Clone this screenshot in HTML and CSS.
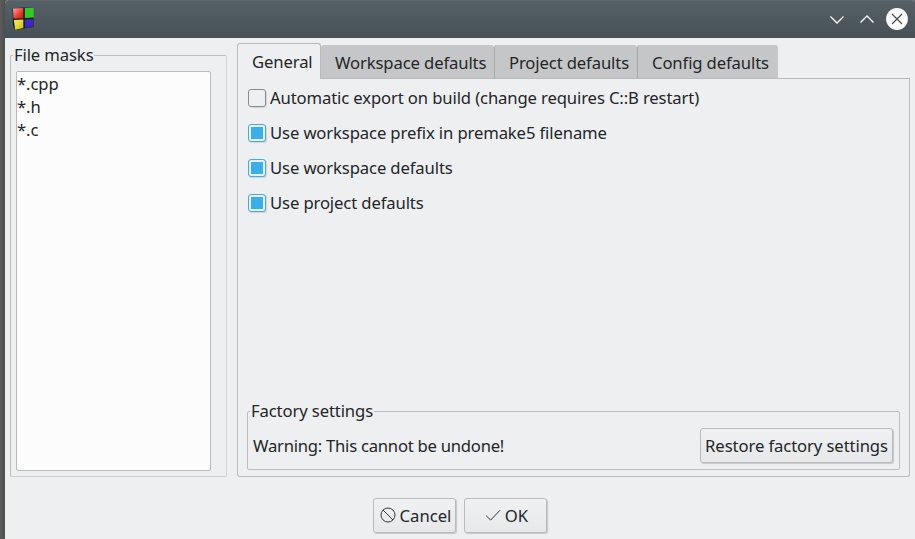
FILE: index.html
```html
<!DOCTYPE html>
<html lang="en">
<head>
<meta charset="utf-8">
<title>Premake settings</title>
<link rel="stylesheet" href="styles.css">
</head>
<body>
<div class="window">
  <header class="titlebar">
    <svg class="logo" width="22" height="24" viewBox="0 0 22 24">
      <defs>
        <linearGradient id="r" x1="0" y1="0" x2="1" y2="1"><stop offset="0" stop-color="#ffa8a0"/><stop offset=".6" stop-color="#ea3c34"/><stop offset="1" stop-color="#c01410"/></linearGradient>
        <linearGradient id="y" x1="0" y1="0" x2="1" y2="1"><stop offset="0" stop-color="#f4f06a"/><stop offset="1" stop-color="#c9c010"/></linearGradient>
      </defs>
      <path d="M0.500 1.500L11 0.500L21.500 1V20L15 21L3 23L1 18Z" fill="#14181a"/>
      <path d="M1 1.500L11.300 1V11.500L1.500 11.500Z" fill="url(#r)"/>
      <path d="M12.800 1L21.800 1V10.500L12.800 11Z" fill="#32c826"/>
      <path d="M1.800 13L11.300 12.500L11.300 21L3.200 22.800Z" fill="url(#y)"/>
      <path d="M12.800 12.500L21.300 12V19.500L12.800 21Z" fill="#3a28c0"/>
    </svg>
    <svg class="controls" width="80" height="24" viewBox="0 0 80 24" fill="none" stroke-width="1.3">
      <path d="M2.500 9.500L9 16L15.500 9.500M32.500 15.500L39 9L45.500 15.500" stroke="#fcfcfc"/>
      <circle cx="69" cy="12" r="10.900" fill="#fcfcfc"/>
      <path d="M64 7L74 17M74 7L64 17" stroke="#475057"/>
    </svg>
  </header>
  <main class="content">
    <section class="group masks">
      <h2 class="legend">File masks</h2>
      <ul class="list"><li>*.cpp</li><li>*.h</li><li>*.c</li></ul>
    </section>
    <section class="notebook">
      <nav class="tabs">
        <div class="tab active">General</div>
        <div class="tab workspace">Workspace defaults</div>
        <div class="tab project">Project defaults</div>
        <div class="tab config">Config defaults</div>
        <div class="tabline"></div>
      </nav>
      <div class="page">
        <div class="checks">
          <div class="check"><span class="box"></span><span class="label">Automatic export on build (change requires C::B restart)</span></div>
          <div class="check"><span class="box on"></span><span class="label">Use workspace prefix in premake5 filename</span></div>
          <div class="check"><span class="box on"></span><span class="label">Use workspace defaults</span></div>
          <div class="check"><span class="box on"></span><span class="label">Use project defaults</span></div>
        </div>
        <section class="group factory">
          <h2 class="legend">Factory settings</h2>
          <div class="row"><span class="warning">Warning: This cannot be undone!</span><div class="button restore">Restore factory settings</div></div>
        </section>
      </div>
    </section>
  </main>
  <footer class="actions">
    <div class="button cancel"><svg width="16" height="16" viewBox="0 0 16 16" fill="none" stroke="#31363b"><circle cx="8" cy="8" r="7"/><path d="M3 3L13 13"/></svg>Cancel</div>
    <div class="button ok"><svg width="16" height="16" viewBox="0 0 16 16" fill="none" stroke="#31363b"><path d="M1.200 8.800L5.700 13L15 3.300"/></svg>OK</div>
  </footer>
</div>
</body>
</html>
```
FILE: styles.css
```css
* { box-sizing: border-box; }
body {
  margin: 0;
  width: 915px;
  height: 539px;
  padding-left: 5px;
  overflow: hidden;
  background: linear-gradient(90deg, #5c5c5c, #4e4e4e 5px);
  font: 16.67px/23px "Noto Sans", sans-serif;
  letter-spacing: -0.125px;
  color: #232627;
  white-space: nowrap;
}
.window { height: 539px; display: flex; flex-direction: column; background: #eeeff1; border-radius: 4px 3px 0 0; }
.titlebar {
  height: 38px;
  flex: none;
  display: flex;
  justify-content: space-between;
  align-items: flex-start;
  padding: 6px 7px 0 7px;
  background: linear-gradient(#566067, #475057);
  border-top: 1px solid #5e676d;
  border-radius: 4px 3px 0 0;
}
.content { display: flex; height: 439px; padding: 5px 5px 0; }
.group { position: relative; border: 1px solid #bcbec0; border-radius: 2px; }
.legend {
  position: absolute;
  top: -13px;
  left: 2px;
  margin: 0;
  padding: 0 1px;
  font: inherit;
  background: #eeeff1;
}
.masks { width: 217px; height: 422px; margin: 12px 10px 0 0; padding: 15px 15px 5px 5px; border-right-color: #d0d2d3; border-bottom-color: #cbcdce; }
.list { height: 400px; margin: 0; padding: 0; list-style: none; background: #fcfcfc; border: 1px solid #b8babc; border-radius: 2px; }
.notebook { width: 673px; height: 434px; display: flex; flex-direction: column; }
.tabs { height: 36px; display: flex; align-items: flex-end; }
.tab { height: 34px; padding: 6px 0 0 14px; background: #c5c6c8; border-bottom: 1px solid #b8babc; border-radius: 3px 3px 0 0; }
.tab.active { width: 84px; height: 36px; background: #eeeff1; border: 1px solid #b8babc; border-bottom: 0; }
.workspace { width: 173px; }
.project { width: 143px; border-left: 1px solid #a6a8aa; }
.config { width: 141px; border-left: 1px solid #a6a8aa; }
.tabline { flex: 1; border-bottom: 1px solid #b8babc; }
.page { flex: 1; display: flex; flex-direction: column; justify-content: space-between; padding: 7px 9px 6px; border: 1px solid #b8babc; border-top: 0; border-radius: 0 0 3px 3px; }
.checks { display: grid; gap: 12px; padding-left: 1px; }
.check { height: 23px; display: flex; align-items: flex-start; gap: 4px; }
.box { width: 18px; height: 18px; margin-top: 3px; padding: 2px; border: 1px solid #898c8e; border-radius: 3px; box-shadow: 1px 1px 1px #d2d3d5; }
.box.on { border-color: #3daee9; background: #3daee9 content-box; }
.factory { height: 59px; }
.row { display: flex; justify-content: space-between; padding: 16px 6px 0 5px; line-height: 35px; }
.warning { letter-spacing: -0.25px; }
.button {
  height: 35px;
  display: flex;
  align-items: center;
  justify-content: center;
  border: 1px solid #b8babc;
  border-radius: 3px;
  background: linear-gradient(#f0f1f2, #e7e8ea);
  box-shadow: 1px 1px 1px #c5c6c8;
}
.button svg { margin-bottom: 2px; }
.restore { width: 193px; letter-spacing: -0.1px; }
.actions { display: flex; gap: 8px; padding: 21px 0 0 368px; }
.cancel, .ok { width: 83px; gap: 4px; padding-left: 2px; letter-spacing: 0; }
```
